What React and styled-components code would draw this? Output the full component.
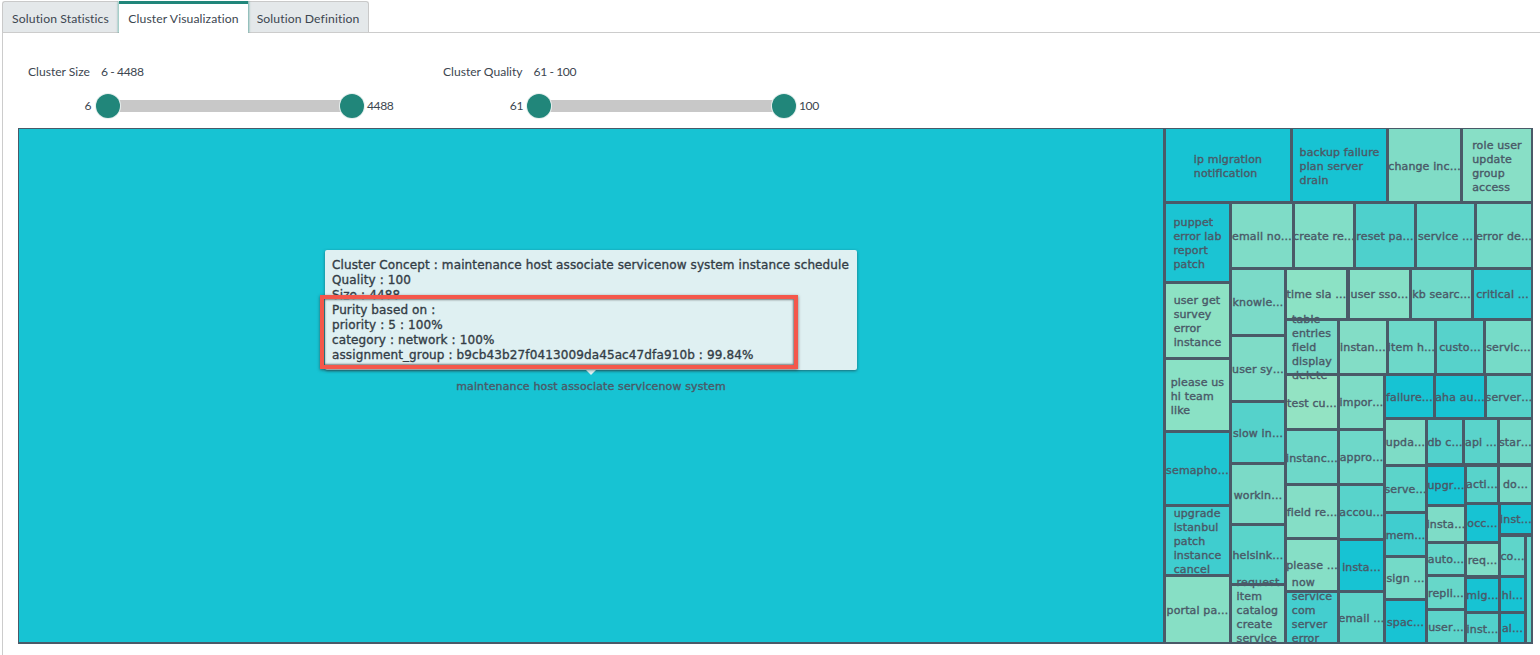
import React from "react";
import styled, { createGlobalStyle } from "styled-components";

const Global = createGlobalStyle`
  html, body { margin: 0; padding: 0; background: #fff; }
  body { height: 655px; overflow: hidden; font-family: "Lato", "Noto Sans", sans-serif; color: #3c4650; }
`;

const Page = styled.div`
  width: 1540px;
  height: 655px;
  padding: 1px 0 0 2px;
  box-sizing: border-box;
  overflow: hidden;
`;
const TabBar = styled.div`
  display: flex;
  height: 31px;
  box-sizing: border-box;
`;
const Tab = styled.div`
  width: ${(p) => p.$w}px;
  margin-left: ${(p) => p.$ml || 0}px;
  box-sizing: border-box;
  display: flex;
  align-items: center;
  justify-content: center;
  font-size: 12.2px;
  letter-spacing: 0.1px;
  color: #3c4650;
  background: ${(p) => (p.$active ? "#fff" : "#e4e8ea")};
  border-top: ${(p) => (p.$active ? "3px solid #21867a" : "1px solid #c9c9c9")};
  border-right: ${(p) => (p.$last ? "1px solid #c9c9c9" : "none")};
  border-left: ${(p) => (p.$first ? "1px solid #c9c9c9" : "none")};
  border-radius: ${(p) => (p.$last ? "0 3px 0 0" : p.$first ? "3px 0 0 0" : "0")};
  box-shadow: ${(p) => (p.$active ? "-1px 0 2px rgba(33,134,122,.55), 1px 0 2px rgba(33,134,122,.55)" : "none")};
  clip-path: ${(p) => (p.$active ? "inset(0 -4px 0 -4px)" : "none")};
  position: relative;
  z-index: ${(p) => (p.$active ? 1 : 0)};
  height: ${(p) => (p.$active ? 32 : 31)}px;
  padding-top: ${(p) => (p.$active ? 0 : 2)}px;
`;
const Panel = styled.div`
  border-top: 1px solid #cccccc;
  border-left: 1px solid #cccccc;
  height: 623px;
  box-sizing: border-box;
`;
const Controls = styled.div`
  display: flex;
  height: 95px;
  padding: 30px 0 0 25px;
  box-sizing: border-box;
`;
const SliderGroup = styled.div`
  width: ${(p) => p.$w}px;
  font-size: 12.1px;
`;
const SliderHead = styled.div`
  display: flex;
  height: 16px;
  align-items: center;
  gap: ${(p) => p.$gap}px;
`;
const Num = styled.span`
  letter-spacing: -0.4px;
  padding-bottom: ${(p) => p.$raise || 0}px;
`;
const SliderRow = styled.div`
  display: flex;
  align-items: center;
  height: 26px;
  margin-top: 14px;
`;
const MinLabel = styled.div`
  width: ${(p) => p.$w}px;
  text-align: right;
  letter-spacing: -0.4px;
  padding-bottom: 2px;
  margin-right: ${(p) => p.$mr}px;
`;
const Rail = styled.div`
  position: relative;
  width: ${(p) => p.$w}px;
  height: 12px;
  margin: 0 3px 0 0;
`;
const Bar = styled.div`
  margin: 0 12px;
  height: 12px;
  background: #c8c8c8;
`;
const Handle = styled.div`
  position: absolute;
  top: -6px;
  ${(p) => (p.$end ? "right: 0;" : "left: 0;")}
  width: 24px;
  height: 24px;
  box-sizing: border-box;
  border-radius: 50%;
  background: #21867a;
  box-shadow: 0 0 0 1px #e6efee;
`;

const Canvas = styled.div`
  position: relative;
  margin-left: 15px;
  width: 1515px;
  height: 516px;
  background: #4a5a68;
  overflow: hidden;
`;
const Cell = styled.div`
  position: absolute;
  display: flex;
  align-items: center;
  justify-content: center;
  &::after {
    content: "";
    position: absolute;
    inset: -3px;
    border: 3px solid #4a5a68;
    z-index: 2;
  }
`;
const Label = styled.div`
  position: relative;
  top: ${(p) => (p.$dy || 0) + 1}px;
  z-index: 1;
  flex: none;
  font-family: "DejaVu Sans", sans-serif;
  font-size: 11px;
  line-height: 14px;
  color: #4a5a68;
  white-space: nowrap;
  -webkit-text-stroke: 0.4px #4a5a68;
  letter-spacing: 0.14px;
`;
const Tooltip = styled.div`
  position: absolute;
  left: 307px;
  top: 122px;
  width: 532px;
  height: 120px;
  box-sizing: border-box;
  padding: 8px 0 0 7px;
  background: #dff0f2;
  font-family: "DejaVu Sans", sans-serif;
  font-size: 12px;
  line-height: 15px;
  letter-spacing: 0.12px;
  color: #333d46;
  white-space: nowrap;
  -webkit-text-stroke: 0.35px #333d46;
  box-shadow: 0 1px 3px rgba(30, 70, 80, 0.7);
  border-radius: 2px;
  z-index: 3;
  &::after {
    content: "";
    position: absolute;
    left: 261px;
    top: 120px;
    border-left: 5px solid transparent;
    border-right: 5px solid transparent;
    border-top: 5px solid #dff0f2;
  }
`;
const Callout = styled.div`
  position: absolute;
  left: 302px;
  top: 167px;
  width: 478px;
  height: 74px;
  box-sizing: border-box;
  border: 4px solid #f4574b;
  box-shadow: inset 0 0 2px 1px rgba(50, 50, 50, 0.6), 0 1px 3px rgba(40, 40, 40, 0.6);
  z-index: 4;
`;

const D = "#17c3d3";
// [label lines, left, top, right, bottom, colour, label shift] in page pixels
const cells = [
  [["maintenance host associate servicenow system"], 19, 129, 1163, 642, "#17c3d3"],
  [["ip migration", "notification"], 1166, 129, 1290, 201, D, 1],
  [["backup failure", "plan server", "drain"], 1293, 129, 1386, 201, D, 1],
  [["change inc…"], 1389, 129, 1460, 201, "#80dcc6", 1],
  [["role user", "update", "group", "access"], 1463, 129, 1531, 201, "#88dfc6", 1],
  [["puppet", "error lab", "report", "patch"], 1166, 204, 1229, 281, "#1bc4d3"],
  [["email no…"], 1232, 204, 1292, 267, "#7fdcc7"],
  [["create re…"], 1295, 204, 1353, 267, "#82dec7"],
  [["reset pa…"], 1356, 204, 1414, 267, "#4ed0cc"],
  [["service …"], 1417, 204, 1474, 267, "#5dd4ca"],
  [["error de…"], 1477, 204, 1531, 267, "#73dac8"],
  [["user get", "survey", "error", "instance"], 1166, 284, 1229, 357, "#8de2c4"],
  [["please us", "hi team", "like"], 1166, 360, 1229, 430, "#8ae1c5", 1],
  [["semapho…"], 1166, 433, 1229, 504, "#1fc6d3", 1],
  [["upgrade", "istanbul", "patch", "instance", "cancel"], 1166, 507, 1229, 574, "#3fcdcf"],
  [["portal pa…"], 1166, 577, 1229, 642, "#87dfc5"],
  [["knowle…"], 1232, 270, 1284, 334, "#7bdac8"],
  [["user sy…"], 1232, 337, 1284, 400, "#7fdcc7"],
  [["slow in…"], 1232, 403, 1284, 462, "#55d2cb"],
  [["workin…"], 1232, 465, 1284, 523, "#7bdac7", 1],
  [["helsink…"], 1232, 526, 1284, 583, "#5ad4ca"],
  [["request", "item", "catalog", "create", "service"], 1232, 586, 1284, 642, "#80dcc6", -4],
  [["time sla …"], 1287, 270, 1346, 318, "#8ce2c5"],
  [["user sso…"], 1350, 270, 1409, 318, "#86e0c6"],
  [["kb searc…"], 1412, 270, 1471, 318, "#70d9c9"],
  [["critical …"], 1474, 270, 1531, 318, "#2ecad2"],
  [["table", "entries", "field", "display", "delete"], 1287, 321, 1337, 373, "#79dac7"],
  [["instan…"], 1340, 321, 1386, 373, "#83ddc6"],
  [["item h…"], 1389, 321, 1434, 373, "#6dd8c9"],
  [["custo…"], 1437, 321, 1483, 373, "#57d2cb"],
  [["servic…"], 1486, 321, 1531, 373, "#76dbc8"],
  [["test cu…"], 1287, 376, 1337, 428, "#93e3c3", 1],
  [["impor…"], 1340, 376, 1383, 428, "#7edcc6"],
  [["failure…"], 1386, 376, 1433, 417, D],
  [["aha au…"], 1436, 376, 1484, 417, D],
  [["server…"], 1487, 376, 1531, 417, "#55d2cb"],
  [["instanc…"], 1287, 431, 1337, 483, "#6ed8c9", 1],
  [["appro…"], 1340, 431, 1383, 483, "#6ed8c9"],
  [["field re…"], 1287, 486, 1337, 537, "#85dec6"],
  [["accou…"], 1340, 486, 1383, 538, "#58d3cb"],
  [["please …"], 1287, 540, 1337, 590, "#86dfc6"],
  [["insta…"], 1340, 541, 1383, 590, D, 1],
  [["now", "service", "com", "server", "error"], 1287, 593, 1337, 642, "#44cecf", -8],
  [["email …"], 1340, 593, 1383, 642, "#5cd4ca"],
  [["upda…"], 1386, 420, 1425, 464, "#7edcc6"],
  [["db c…"], 1428, 420, 1462, 464, "#52d1cc"],
  [["api …"], 1465, 420, 1497, 464, "#5ad3cb"],
  [["star…"], 1500, 420, 1531, 464, "#72d9c8"],
  [["serve…"], 1386, 467, 1425, 511, "#5cd4ca"],
  [["mem…"], 1386, 514, 1425, 555, "#40cdcf"],
  [["sign …"], 1386, 558, 1425, 598, "#74dac8"],
  [["spac…"], 1386, 601, 1425, 642, "#18c3d3"],
  [["upgr…"], 1428, 466, 1464, 504, D],
  [["insta…"], 1428, 507, 1464, 541, "#7edcc7"],
  [["auto…"], 1428, 544, 1464, 574, "#64d6ca"],
  [["repli…"], 1428, 577, 1464, 608, "#67d7c9"],
  [["user…"], 1428, 611, 1464, 642, "#5cd4ca"],
  [["acti…"], 1467, 466, 1497, 502, "#58d3cb"],
  [["do…"], 1500, 466, 1531, 502, "#77dbc8"],
  [["occ…"], 1467, 505, 1498, 541, D],
  [["inst…"], 1501, 505, 1531, 533, D],
  [["req…"], 1467, 544, 1498, 575, "#80ddc7"],
  [["mig…"], 1467, 579, 1498, 611, D],
  [["inst…"], 1467, 614, 1498, 642, "#52d1cc", 1],
  [["co…"], 1501, 537, 1524, 575, "#5fd5ca"],
  [["hi…"], 1501, 578, 1524, 611, D],
  [["al…"], 1501, 614, 1524, 642, D],
  [[], 1527, 537, 1531, 642, "#5fd5ca"],
];

const X0 = 18;
const Y0 = 128;

const sliders = [
  { name: "Cluster Size", range: "6 - 4488", min: "6", max: "4488", groupW: 415, gap: 11, minW: 63, mr: 5, railW: 268 },
  { name: "Cluster Quality", range: "61 - 100", min: "61", max: "100", groupW: 400, gap: 11, minW: 80, mr: 4, railW: 269 },
];

export default function App() {
  return (
    <>
      <Global />
      <Page>
        <TabBar>
          <Tab $w={116} $first>Solution Statistics</Tab>
          <Tab $w={129} $ml={1} $active>Cluster Visualization</Tab>
          <Tab $w={121} $last>Solution Definition</Tab>
        </TabBar>
        <Panel>
          <Controls>
            {sliders.map((s) => (
              <SliderGroup key={s.name} $w={s.groupW}>
                <SliderHead $gap={s.gap}>
                  <span>{s.name}</span>
                  <Num>{s.range}</Num>
                </SliderHead>
                <SliderRow>
                  <MinLabel $w={s.minW} $mr={s.mr}>{s.min}</MinLabel>
                  <Rail $w={s.railW}>
                    <Bar />
                    <Handle />
                    <Handle $end />
                  </Rail>
                  <Num $raise={2}>{s.max}</Num>
                </SliderRow>
              </SliderGroup>
            ))}
          </Controls>
          <Canvas>
            {cells.map(([lines, l, t, r, b, c, dy], i) => (
              <Cell
                key={i}
                style={{ left: l - X0, top: t - Y0, width: r - l, height: b - t, background: c }}
              >
                {lines.length > 0 && (
                  <Label $dy={dy}>
                    {lines.map((line) => (
                      <div key={line}>{line}</div>
                    ))}
                  </Label>
                )}
              </Cell>
            ))}
            <Tooltip>
              <div>Cluster Concept : maintenance host associate servicenow system instance schedule</div>
              <div>Quality : 100</div>
              <div>Size : 4488</div>
              <div>Purity based on :</div>
              <div>priority : 5 : 100%</div>
              <div>category : network : 100%</div>
              <div>assignment_group : b9cb43b27f0413009da45ac47dfa910b : 99.84%</div>
            </Tooltip>
            <Callout />
          </Canvas>
        </Panel>
      </Page>
    </>
  );
}
